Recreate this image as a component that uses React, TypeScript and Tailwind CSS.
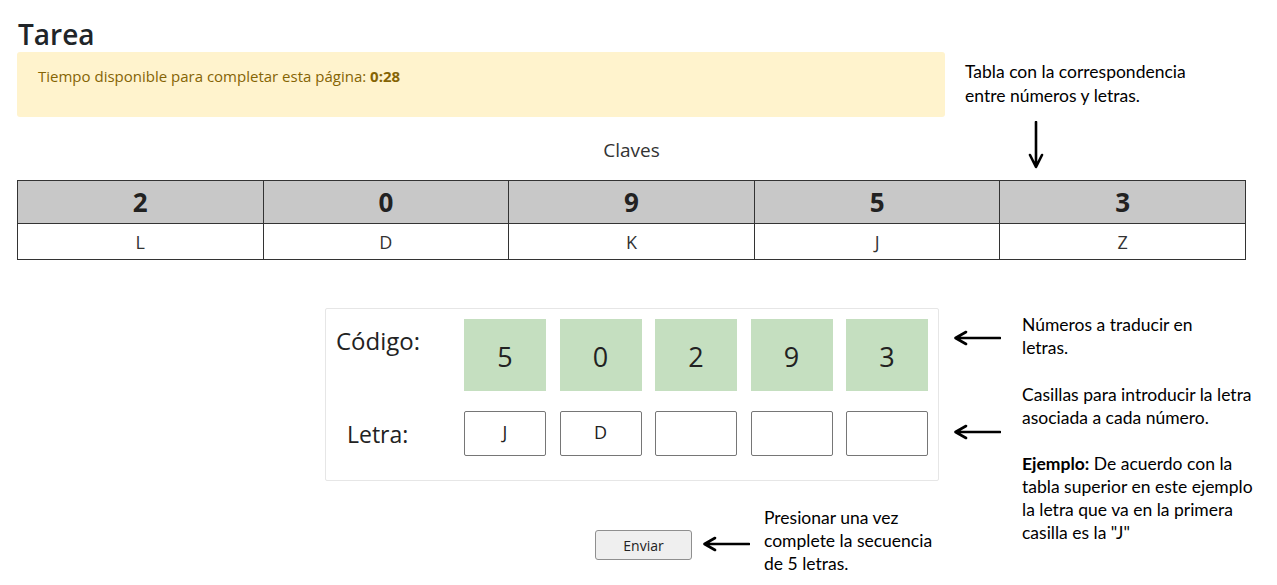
import { useState } from 'react';

const ui = { fontFamily: '"Open Sans", "Noto Sans", sans-serif' };
const note = { fontFamily: 'Lato, "Liberation Sans", sans-serif' };

const claves = [
  { n: '2', l: 'L' },
  { n: '0', l: 'D' },
  { n: '9', l: 'K' },
  { n: '5', l: 'J' },
  { n: '3', l: 'Z' },
];

const codigo = ['5', '0', '2', '9', '3'];

function ArrowLeft() {
  return (
    <svg width="48" height="16" viewBox="0 0 48 16" className="block">
      <path d="M47 8 H3 M13 2 L2.5 8 L13 14" fill="none" stroke="#000" strokeWidth="2.6" strokeLinecap="round" strokeLinejoin="round" />
    </svg>
  );
}

function ArrowDown() {
  return (
    <svg width="16" height="48" viewBox="0 0 16 48" className="block">
      <path d="M8 1 V45 M2 34 L8 46 L14 34" fill="none" stroke="#000" strokeWidth="2.6" strokeLinecap="round" strokeLinejoin="round" />
    </svg>
  );
}

export default function App() {
  const [letras, setLetras] = useState(['J', 'D', '', '', '']);

  return (
    <div className="min-h-[585px] w-[1277px] bg-white pt-[16px] text-[#212529]" style={ui}>
      {/* top: title, timer and note */}
      <div className="flex">
        <div className="ml-[17px] w-[928px]">
          <h1 className="pl-[1px] text-[28px] font-semibold leading-[36px] text-[#212529]">Tarea</h1>
          <div className="h-[65px] rounded-[3px] bg-[#fff3cd] px-[21px] pt-[14px] text-[15px] leading-[21px] text-[#856404]">
            Tiempo disponible para completar esta página: <b>0:28</b>
          </div>
        </div>
        <div className="ml-[20px] pt-[44px] text-[17.5px] leading-[24px] text-black" style={note}>
          Tabla con la correspondencia
          <br />
          entre números y letras.
        </div>
      </div>

      {/* claves */}
      <div className="relative ml-[17px] w-[1229px] pt-[21px] pb-[18px]">
        <div className="text-center text-[19px] leading-[24px] text-[#333]">Claves</div>
        <div className="absolute left-[1011px] top-[4px]">
          <ArrowDown />
        </div>
      </div>

      <div className="ml-[17px] w-[1229px]">
        <table className="w-full table-fixed border-collapse">
          <tbody>
            <tr className="bg-[#c8c8c8]">
              {claves.map((c) => (
                <td key={c.n} className="h-[43px] border border-[#333] text-center text-[26px] font-bold leading-[30px] text-[#222]">
                  {c.n}
                </td>
              ))}
            </tr>
            <tr>
              {claves.map((c) => (
                <td key={c.n} className="h-[36px] border border-[#333] text-center text-[18px] leading-[24px] text-[#333]">
                  {c.l}
                </td>
              ))}
            </tr>
          </tbody>
        </table>
      </div>

      {/* code panel and notes */}
      <div className="mt-[48px] flex items-start">
        <div className="ml-[325px] h-[173px] w-[614px] rounded-[2px] border border-[#e6e6e6] pl-[10px] pt-[10px]">
          <div className="flex">
            <div className="w-[128px] pt-[6px] text-[24px] leading-[32px] text-[#222]">Código:</div>
            <div className="flex gap-[13.5px]">
              {codigo.map((d, i) => (
                <div key={i} className="flex h-[72px] w-[82px] items-center justify-center bg-[#c5dfc0] pt-[4px] text-[27px] text-[#222]">
                  {d}
                </div>
              ))}
            </div>
          </div>
          <div className="mt-[20px] flex items-center">
            <div className="w-[128px] pl-[11px] text-[23px] leading-[32px] text-[#222]">Letra:</div>
            <div className="flex gap-[13.5px]">
              {letras.map((l, i) => (
                <input
                  key={i}
                  value={l}
                  maxLength={1}
                  onChange={(e) => {
                    const next = [...letras];
                    next[i] = e.target.value.toUpperCase();
                    setLetras(next);
                  }}
                  className="h-[45px] w-[82px] rounded-[2px] border border-[#767676] pb-[4px] text-center text-[18px] text-[#222] outline-none"
                />
              ))}
            </div>
          </div>
        </div>

        <div className="ml-[14px] flex flex-col">
          <div className="mt-[22px]">
            <ArrowLeft />
          </div>
          <div className="mt-[78px]">
            <ArrowLeft />
          </div>
        </div>

        <div className="ml-[21px] pt-[5px] text-[17.5px] leading-[23px] text-black" style={note}>
          <p>
            Números a traducir en
            <br />
            letras.
          </p>
          <p className="mt-[24px]">
            Casillas para introducir la letra
            <br />
            asociada a cada número.
          </p>
          <p className="mt-[23px]">
            <b>Ejemplo:</b> De acuerdo con la
            <br />
            tabla superior en este ejemplo
            <br />
            la letra que va en la primera
            <br />
            casilla es la "J"
          </p>
        </div>
      </div>

      {/* send */}
      <div className="-mt-[38px] flex items-start">
        <button
          type="button"
          className="ml-[595px] mt-[24px] h-[30px] w-[97px] rounded-[3px] border border-[#8f8f8f] bg-[#efefef] text-[14px] text-[#222]"
        >
          Enviar
        </button>
        <div className="ml-[10px] mt-[30px]">
          <ArrowLeft />
        </div>
        <div className="ml-[14px] text-[17.5px] leading-[23px] text-black" style={note}>
          Presionar una vez
          <br />
          complete la secuencia
          <br />
          de 5 letras.
        </div>
      </div>
    </div>
  );
}
